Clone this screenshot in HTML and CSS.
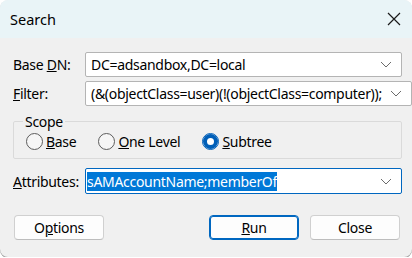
FILE: index.html
```html
<!DOCTYPE html>
<html>
<head>
  <title>Search</title>
  <link rel="stylesheet" href="styles.css">
</head>
<body>
  <div class="window">
    <div class="titlebar">
      <span class="title">Search</span>
      <svg class="close" width="14" height="14" viewBox="0 0 14 14">
        <path d="M1 1 L13 13 M13 1 L1 13" stroke="#1a1a1a" stroke-width="1.2" fill="none"/>
      </svg>
    </div>
    <div class="content">
      <div class="row">
        <label>Base <u>D</u>N:</label>
        <div class="combo">
          <span class="value">DC=adsandbox,DC=local</span>
          <svg class="chevron" width="12" height="7" viewBox="0 0 12 7"><path d="M1 1 L6 6 L11 1" stroke="#6b6b6b" stroke-width="1" fill="none"/></svg>
        </div>
      </div>
      <div class="row">
        <label><u>F</u>ilter:</label>
        <div class="combo">
          <span class="value">(&amp;(objectClass=user)(!(objectClass=computer));</span>
          <svg class="chevron" width="12" height="7" viewBox="0 0 12 7"><path d="M1 1 L6 6 L11 1" stroke="#6b6b6b" stroke-width="1" fill="none"/></svg>
        </div>
      </div>

      <fieldset class="scope">
        <legend>Scope</legend>
        <div class="radios">
          <div class="radio"><span class="dot"></span><span><u>B</u>ase</span></div>
          <div class="radio"><span class="dot"></span><span><u>O</u>ne Level</span></div>
          <div class="radio checked"><span class="dot"></span><span><u>S</u>ubtree</span></div>
        </div>
      </fieldset>

      <div class="row attrs">
        <label><u>A</u>ttributes:</label>
        <div class="combo focused">
          <span class="value"><span class="selected">sAMAccountName;memberOf</span></span>
          <svg class="chevron" width="12" height="7" viewBox="0 0 12 7"><path d="M1 1 L6 6 L11 1" stroke="#6b6b6b" stroke-width="1" fill="none"/></svg>
        </div>
      </div>

      <div class="buttons">
        <button class="btn">O<u>p</u>tions</button>
        <div class="right">
          <button class="btn default"><u>R</u>un</button>
          <button class="btn">Close</button>
        </div>
      </div>
    </div>
  </div>
</body>
</html>
```

FILE: styles.css
```css
body {
  margin: 0;
  background-color: #ffffff;
  font-family: "Noto Sans", sans-serif;
  font-size: 14px;
  color: #000;
}

.window {
  width: 412px;
  height: 257px;
  background-color: #f0f0f0;
  border-radius: 8px;
  overflow: hidden;
  box-shadow: 0 1px 0 #9a9a9a;
}

.titlebar {
  height: 38px;
  background-color: #e9f4f7;
  display: flex;
  align-items: center;
  justify-content: space-between;
  padding: 0 11px 0 10px;
}

.title {
  font-size: 14.5px;
  margin-top: -1px;
}

.content {
  padding: 14px 10px 0 13px;
}

.row {
  display: grid;
  grid-template-columns: 72px 1fr;
  align-items: center;
  margin-bottom: 4px;
}

label {
  white-space: nowrap;
  letter-spacing: -0.3px;
}

.combo {
  height: 23px;
  background-color: #fff;
  border: 1px solid #b4b4b4;
  border-radius: 2px;
  display: flex;
  align-items: center;
  padding: 0 9px 0 5px;
}

.value {
  flex: 1;
  overflow: hidden;
  white-space: nowrap;
  letter-spacing: -0.3px;
  margin-right: 8px;
}

.chevron {
  flex-shrink: 0;
}

.focused {
  height: 24px;
  border-color: #0067c0;
  padding-left: 1px;
}

.selected {
  background-color: #0078d7;
  color: #fff;
  padding: 1px 0 2px;
}

.scope {
  margin: 6px 0 0 0;
  padding: 1px 0 7px 12px;
  border: 1px solid #dadada;
  border-radius: 2px;
}

.scope legend {
  padding: 0 2px;
  margin-left: -3px;
  letter-spacing: -0.3px;
}

.radios {
  display: flex;
  gap: 22px;
}

.radio {
  display: flex;
  align-items: center;
  gap: 3px;
  letter-spacing: -0.3px;
}

.dot {
  width: 17px;
  height: 17px;
  border: 1px solid #5c5c5c;
  border-radius: 50%;
  background-color: #f6f6f6;
  box-sizing: border-box;
  display: inline-block;
}

.radio.checked .dot {
  border-color: #005fb8;
  box-shadow: inset 0 0 0 4px #005fb8, inset 0 0 0 8px #fff;
  background-color: #fff;
}

.attrs {
  margin-top: 9px;
}

.buttons {
  display: flex;
  justify-content: space-between;
  margin-top: 21px;
  padding: 0 2px 0 1px;
}

.right {
  display: flex;
  gap: 11px;
}

.btn {
  width: 90px;
  height: 25px;
  font-family: "Noto Sans", sans-serif;
  font-size: 14px;
  letter-spacing: -0.3px;
  background-color: #fdfdfd;
  border: 1px solid #d0d0d0;
  border-bottom-color: #bdbdbd;
  border-radius: 4px;
  padding: 0;
  color: #000;
}

.default {
  border: 1px solid #0067c0;
  box-shadow: inset 0 0 0 1px #0067c0;
}
```
